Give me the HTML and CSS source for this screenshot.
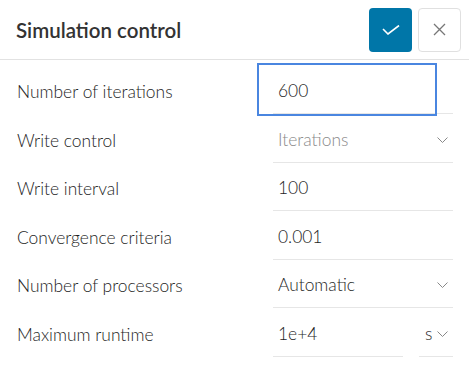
FILE: index.html
```html
<!DOCTYPE html>
<html>
  <head>
    <title>Simulation control</title>
    <link rel="stylesheet" href="styles.css">
  </head>
  <body>
    <div class="panel">
      <div class="header">
        <h1 class="title">Simulation control</h1>
        <button class="btn btn-ok" type="button">
          <svg width="18" height="10" viewBox="0 0 18 10"><polyline points="1,4 6,9 17,0.5" fill="none" stroke="#fff" stroke-width="1.6"/></svg>
        </button>
        <button class="btn btn-close" type="button">
          <svg width="13" height="13" viewBox="0 0 13 13"><path d="M1 1L12 12M12 1L1 12" stroke="#777" stroke-width="1.3"/></svg>
        </button>
      </div>

      <div class="form">
        <div class="label">Number of iterations</div>
        <div class="field focused">600</div>

        <div class="label">Write control</div>
        <div class="field select placeholder">Iterations
          <svg class="chev" width="11" height="6" viewBox="0 0 11 6"><polyline points="0.5,0.5 5.5,5.5 10.5,0.5" fill="none" stroke="#888" stroke-width="1"/></svg>
        </div>

        <div class="label">Write interval</div>
        <div class="field">100</div>

        <div class="label">Convergence criteria</div>
        <div class="field">0.001</div>

        <div class="label">Number of processors</div>
        <div class="field select">Automatic
          <svg class="chev" width="11" height="6" viewBox="0 0 11 6"><polyline points="0.5,0.5 5.5,5.5 10.5,0.5" fill="none" stroke="#888" stroke-width="1"/></svg>
        </div>

        <div class="label">Maximum runtime</div>
        <div class="split">
          <div class="field value">1e+4</div>
          <div class="field select unit">s
            <svg class="chev" width="11" height="6" viewBox="0 0 11 6"><polyline points="0.5,0.5 5.5,5.5 10.5,0.5" fill="none" stroke="#888" stroke-width="1"/></svg>
          </div>
        </div>
      </div>
    </div>
  </body>
</html>
```

FILE: styles.css
```css
body {
  margin: 0;
  background-color: #fff;
  font-family: Lato, "Open Sans", sans-serif;
  color: #1e1e1e;
}
.header {
  display: flex;
  align-items: center;
  height: 59px;
  padding: 0 8px 0 16px;
  border-bottom: 1px solid #e2e2e2;
}
.title {
  flex: 1;
  margin: 0;
  font-size: 20.5px;
  font-weight: 600;
  color: #333;
}
.btn {
  display: flex;
  align-items: center;
  justify-content: center;
  width: 43px;
  height: 44px;
  padding: 0;
  border-radius: 4px;
  cursor: pointer;
}
.btn-ok {
  background-color: #0076a8;
  border: none;
  margin-right: 6px;
}
.btn-close {
  background-color: #fff;
  border: 1px solid #e0e0e0;
}
.form {
  display: grid;
  grid-template-columns: 1fr 180px;
  grid-auto-rows: 48.6px;
  padding: 5.4px 16px 0 16px;
  font-size: 17.4px;
  font-weight: 300;
}
.label,
.field {
  display: flex;
  align-items: flex-end;
  padding-bottom: 10px;
  line-height: 24px;
}
.label {
  padding-left: 1px;
}
.field {
  position: relative;
  padding-left: 5px;
  border-bottom: 1px solid #e6e6e6;
}
.focused::after {
  content: "";
  position: absolute;
  left: -16px;
  right: 16px;
  top: -2px;
  bottom: -3px;
  border: 2px solid #4a86e0;
}
.select {
  justify-content: space-between;
  padding-right: 5px;
}
.placeholder {
  color: #8a8a8a;
}
.chev {
  margin-bottom: 9px;
}
.split {
  display: flex;
  gap: 16px;
}
.value {
  flex: 1;
}
.unit {
  width: 34px;
  padding-left: 6px;
  box-sizing: border-box;
}
```
